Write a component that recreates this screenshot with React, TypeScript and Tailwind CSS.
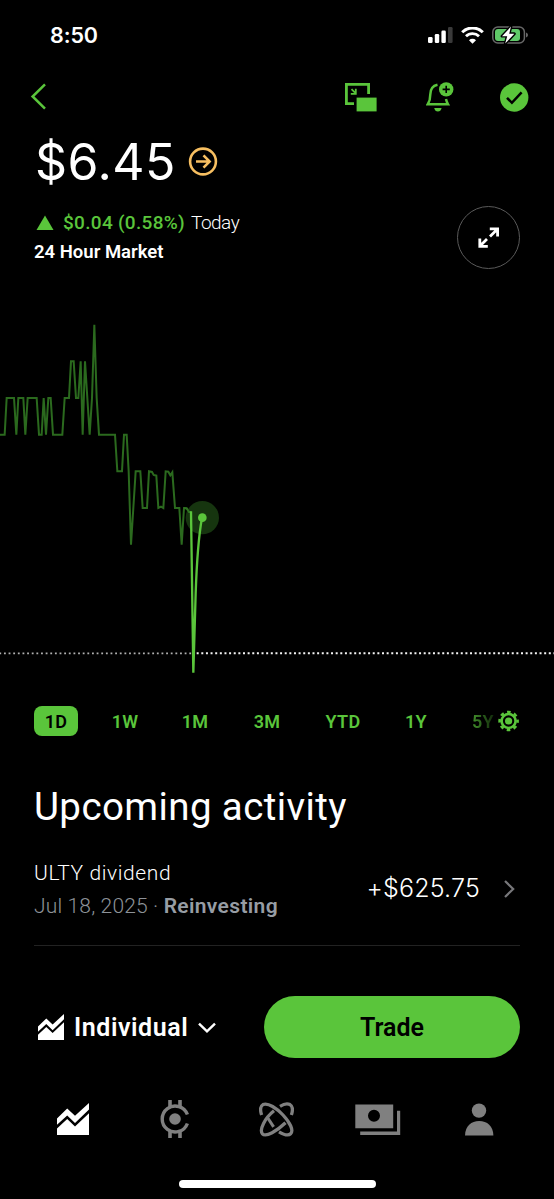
const points =
  '0,374 14,374 20,264 42,264 49,374 55,264 70,264 76,374 83,264 110,264 117,374 125,374 131,264 138,374 145,264 152,264 159,374 187,374 194,264 207,264 213,154 221,154 228,264 235,264 242,154 248,374 255,154 269,374 276,264 283,44 290,264 297,374 345,374 352,484 366,484 372,374 380,374 386,484 393,704 400,594 407,484 421,484 428,594 441,594 447,484 456,486 461,495 469,497 475,594 483,590 490,594 497,484 505,485 511,496 517,487 525,594 538,594 545,704 552,594 560,595 567,606 573,606';

function StatusBar() {
  return (
    <div className="flex h-[70px] items-center justify-between pl-[50px] pr-[26px]">
      <span className="pt-[2px] font-['Inter'] text-[21.5px] font-semibold leading-none tracking-[-0.1px]">8:50</span>
      <div className="flex items-center">
        <svg width="25" height="16" viewBox="0 0 25 16" fill="#fff">
          <rect x="0" y="10" width="4.6" height="6" rx="1.3" />
          <rect x="6.8" y="7" width="4.4" height="9" rx="1.3" />
          <rect x="13.4" y="3.6" width="4.4" height="12.4" rx="1.3" />
          <rect x="20" y="0" width="4.6" height="16" rx="1.3" fill="#3a3a3a" />
        </svg>
        <svg className="ml-[8px]" width="23" height="17" viewBox="0 0 23 17" fill="none" stroke="#fff">
          <path d="M1.2 5.3 A14.5 14.5 0 0 1 21.8 5.3" strokeWidth="3" />
          <path d="M5 9.3 A9.2 9.2 0 0 1 18 9.3" strokeWidth="2.8" />
          <path d="M11.5 16.8 L8 13.2 A5 5 0 0 1 15 13.2 Z" fill="#fff" stroke="none" />
        </svg>
        <svg className="ml-[8px]" width="36" height="20" viewBox="0 0 36 20">
          <rect x="0.8" y="2" width="31.6" height="16" rx="5" fill="none" stroke="#686868" strokeWidth="1.5" />
          <rect x="3" y="4" width="25" height="12" rx="3" fill="#5fc968" />
          <path d="M34 7.6 Q36 8.3 36 10 Q36 11.7 34 12.4 Z" fill="#686868" />
          <path
            d="M19 1.6 L10 11.2 H15.2 L13.2 18.6 L22.4 8.7 H17.2 Z"
            fill="#fff"
            stroke="#000"
            strokeWidth="2.8"
            strokeLinejoin="round"
            paintOrder="stroke"
          />
        </svg>
      </div>
    </div>
  );
}

function TopNav() {
  return (
    <div className="flex h-[54px] items-center pl-[30px] pr-[25px]">
      <svg width="17" height="28" viewBox="0 0 17 28" fill="none" stroke="#5ac53b" strokeWidth="2.5">
        <path d="M15 1.3 L2.6 13.5 L15 25.7" />
      </svg>
      <svg className="ml-auto" width="33" height="30" viewBox="0 0 33 30">
        <path d="M9 21.6 H1.4 V2.4 H23.6 V12" fill="none" stroke="#5ac53b" strokeWidth="2.8" />
        <path d="M6.5 7.2 L10 10.7 M10.8 6.8 V11.8 H5.8" fill="none" stroke="#5ac53b" strokeWidth="1.8" />
        <rect x="11.6" y="15.6" width="20" height="13.8" fill="#5ac53b" />
      </svg>
      <svg className="ml-[48px]" width="28" height="31" viewBox="0 0 28 31">
        <path
          d="M11.5 2.7 C6.5 3.8 4.3 7.5 4.3 12.5 C4.3 17.5 3.6 19.5 1.8 22.3 H22 C21 20.6 20.4 19 20 17"
          fill="none"
          stroke="#5ac53b"
          strokeWidth="2.5"
        />
        <path d="M8.2 26 H15.6 Q14.8 29.6 11.9 29.6 Q9 29.6 8.2 26 Z" fill="#5ac53b" />
        <circle cx="20.2" cy="7.4" r="7.2" fill="#5ac53b" />
        <path d="M20.2 3.8 V11 M16.6 7.4 H23.8" stroke="#000" strokeWidth="1.6" />
      </svg>
      <svg className="ml-[46px]" width="29" height="29" viewBox="0 0 29 29">
        <circle cx="14.2" cy="14.5" r="14.2" fill="#5ac53b" />
        <path d="M7 14.8 L11.9 19.8 L21.6 9.4" fill="none" stroke="#000" strokeWidth="2.5" />
      </svg>
    </div>
  );
}

function PriceHeader() {
  return (
    <div className="pl-[34px] pr-[34px]">
      <div className="flex h-[75px] items-center">
        <span className="w-[142px] pl-px font-['Inter'] text-[50px] leading-none tracking-[0.5px]">$6.45</span>
        <svg className="ml-[12px]" width="30" height="30" viewBox="0 0 30 30" fill="none" stroke="#f7bf61">
          <circle cx="15" cy="14.5" r="12.9" strokeWidth="2.6" />
          <path d="M8 14.5 H21 M15.5 8.3 L21.6 14.5 L15.5 20.7" strokeWidth="2.6" />
        </svg>
      </div>
      <div className="flex h-[77px] items-center justify-between">
        <div>
          <div className="flex h-[28px] items-center pb-px text-[19px] leading-none">
            <svg width="18" height="15" viewBox="0 0 18 15" className="ml-[2px]">
              <path d="M9 0.5 L17.5 15 H0.5 Z" fill="#5ac53b" />
            </svg>
            <span className="ml-[9px] font-medium tracking-[0.3px] text-[#5ac53b]">$0.04 (0.58%)</span>
            <span className="ml-[6px] font-[350] tracking-[-0.5px]">Today</span>
          </div>
          <div className="flex h-[30px] items-center pt-[2px] text-[18.5px] font-semibold leading-none tracking-[0px]">
            24 Hour Market
          </div>
        </div>
        <div className="flex size-[63px] items-center justify-center rounded-full border border-[#5a5a5a]">
          <svg width="22" height="22" viewBox="0 0 22 22" fill="none" stroke="#fff" strokeWidth="2.8">
            <path d="M12 9.5 L19 2.5 M11.8 1.8 H19.6 V9.6" />
            <path d="M9 12 L2 19 M1.8 11.6 V19.4 H9.8" />
          </svg>
        </div>
      </div>
    </div>
  );
}

function PriceChart() {
  return (
    <svg className="mt-[34px] block" width="554" height="380" viewBox="0 0 1662 1140" fill="none">
      <path d="M-2 1030 H577" stroke="#b0b0b0" strokeWidth="5.5" strokeDasharray="5.5 8.4" />
      <path d="M590 1030 H1662" stroke="#f4f4f4" strokeWidth="6" strokeDasharray="6 7.9" />
      <polyline points={points} stroke="#2b6a1e" strokeWidth="6" />
      <circle cx="607" cy="623" r="50" fill="#16350f" />
      <polyline points="552,594 560,595 567,606 573,606" stroke="#2f7321" strokeWidth="6" />
      <path d="M573 604 L580 1088 L587 850 Q592 700 606 623" stroke="#5ac53b" strokeWidth="7" strokeLinejoin="bevel" />
      <circle cx="607" cy="623" r="13" fill="#5ac53b" />
    </svg>
  );
}

function RangeTabs() {
  return (
    <div className="mt-[16px] flex h-[30px] items-center pl-[34px] text-[18px] font-semibold leading-none tracking-[0.3px] text-[#5ac53b]">
      <div className="flex h-[30px] w-[44px] items-center justify-center rounded-[8px] bg-[#5ac53b] pt-px text-black">1D</div>
      <span className="w-[94px] pt-px text-center">1W</span>
      <span className="w-[46px] pt-px text-center">1M</span>
      <span className="w-[98px] pt-px text-center">3M</span>
      <span className="w-[54px] pt-px text-center">YTD</span>
      <span className="w-[92px] pt-px text-center">1Y</span>
      <span className="ml-[10px] w-[26px] bg-gradient-to-r from-[#43922c] to-[#0a1a06] bg-clip-text pt-px text-transparent">
        5Y
      </span>
      <svg width="22" height="22" viewBox="0 0 22 22" fill="none" stroke="#5ac53b">
        <circle cx="10.6" cy="11" r="7" strokeWidth="2.6" />
        <circle cx="10.6" cy="11" r="9" strokeWidth="2.6" strokeDasharray="3.6 3.469" strokeDashoffset="1.8" />
        <circle cx="10.6" cy="11" r="3.6" fill="#5ac53b" stroke="none" />
      </svg>
    </div>
  );
}

function UpcomingActivity() {
  return (
    <section className="mx-[34px] h-[210px] border-b border-[#222] pt-[48px]">
      <h2 className="text-[38.5px] leading-[46px] tracking-[0.4px]">Upcoming activity</h2>
      <div className="mt-[25px] flex items-center">
        <div>
          <div className="h-[34px] pt-px text-[21px] font-[350] leading-[34px] tracking-[0.6px]">ULTY dividend</div>
          <div className="h-[34px] text-[21px] leading-[34px] text-[#8d9298]">
            <span className="font-[350] tracking-[0.15px]">Jul 18, 2025 · </span>
            <span className="font-semibold tracking-[0.35px] text-[#979da4]">Reinvesting</span>
          </div>
        </div>
        <span className="ml-auto font-['Inter'] text-[25px] font-light tracking-[0.2px]">+$625.75</span>
        <svg className="ml-[23px] mr-[4px]" width="13" height="20" viewBox="0 0 13 20" fill="none" stroke="#77777a" strokeWidth="2.2">
          <path d="M2 2 L10.2 10 L2 18" />
        </svg>
      </div>
    </section>
  );
}

function InvestIcon({ size }: { size: number }) {
  return (
    <svg width={size} height={size} viewBox="0 0 32 32" fill="#fff">
      <path d="M0 15.5 L10.2 5.4 L18 12.8 L32 0 V6.5 L18 20 L10.2 12.4 L0 21.8 Z" />
      <path d="M0 25.5 L10.2 16 L18 23.5 L32 10.3 V32 H0 Z" />
    </svg>
  );
}

function TradeBar() {
  return (
    <div className="mt-[50px] flex h-[62px] items-center pl-[38px] pr-[34px]">
      <InvestIcon size={26} />
      <span className="ml-[10px] pt-px text-[25px] font-semibold leading-none tracking-[0.55px]">Individual</span>
      <svg className="ml-[9px]" width="20" height="14" viewBox="0 0 20 14" fill="none" stroke="#fff" strokeWidth="2.4">
        <path d="M2 3.6 L10 11.4 L18 3.6" />
      </svg>
      <button className="ml-auto h-[62px] w-[256px] rounded-full bg-[#5ac53b] pt-[2px] text-[25px] font-semibold text-black">
        Trade
      </button>
    </div>
  );
}

function TabBar() {
  return (
    <div className="mt-[36px] flex h-[50px] items-center pl-[57px]">
      <InvestIcon size={32} />
      <svg className="ml-[71px]" width="30" height="40" viewBox="0 0 30 40" fill="none" stroke="#808080">
        <path d="M27.4 15.5 A13 13 0 1 0 27.4 24.5" strokeWidth="3.4" />
        <path d="M10 1 V8 M20 1 V8 M10 32 V39 M20 32 V39" strokeWidth="3.6" />
        <circle cx="15" cy="20" r="5.8" fill="#808080" stroke="none" />
      </svg>
      <svg className="ml-[69px]" width="35" height="35" viewBox="0 0 35 35" fill="none" stroke="#808080" strokeWidth="3.3">
        <path d="M2.6 13 C1 8 1.5 4 4 2.6 C9 0.2 18 6.5 24 13 C31 20.5 35 28.5 31.6 31.8 C29.6 33.8 24.5 32.5 20 29.8" />
        <path d="M32.4 13 C34 8 33.5 4 31 2.6 C28.5 1.4 24.8 2 21 4.3 M15 8.8 C6 16 0 27.5 3.4 31.8 C7 35.5 18 29 26.5 20.8" />
        <path d="M8.8 16 L14.6 24.9" strokeWidth="3" />
      </svg>
      <svg className="ml-[61px]" width="46" height="32" viewBox="0 0 46 32">
        <path
          d="M0.3 1.5 H38.2 V25.2 H0.3 Z M19 6.8 A6 6 0 1 0 19 18.8 A6 6 0 1 0 19 6.8 Z"
          fill="#808080"
          fillRule="evenodd"
        />
        <path d="M42 7.8 H45.2 V32 H5.2 V28.6 H42 Z" fill="#808080" />
      </svg>
      <svg className="ml-[64px]" width="29" height="33" viewBox="0 0 29 33" fill="#808080">
        <circle cx="14" cy="7.6" r="7.2" />
        <path d="M0 32.5 C0.2 23 6.3 18 14.2 18 C22.1 18 28.2 23 28.4 32.5 Z" />
      </svg>
    </div>
  );
}

export default function App() {
  return (
    <div className="flex h-[1199px] w-[554px] flex-col overflow-hidden bg-black font-['Roboto',sans-serif] text-white">
      <StatusBar />
      <TopNav />
      <PriceHeader />
      <PriceChart />
      <RangeTabs />
      <UpcomingActivity />
      <TradeBar />
      <TabBar />
      <div className="ml-[179px] mt-[36px] h-[8px] w-[197px] rounded-full bg-white" />
    </div>
  );
}
